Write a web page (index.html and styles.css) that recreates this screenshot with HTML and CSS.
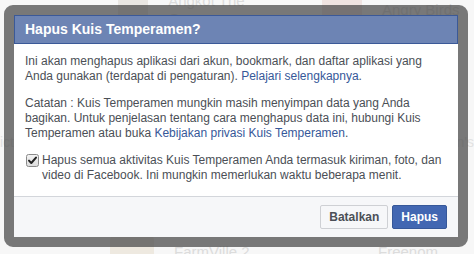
FILE: index.html
```html
<!DOCTYPE html>
<html lang="id">
<head>
<meta charset="utf-8">
<title>Hapus Kuis Temperamen?</title>
<link rel="stylesheet" href="styles.css">
</head>
<body>
<div class="page">
  <div class="row row-top">
    <div class="tile">
      <div class="app-icon"></div>
      <span class="app-name">Angkot The Game</span>
    </div>
    <div class="tile">
      <div class="app-icon icon-red"></div>
      <span class="app-name">Angry Birds</span>
    </div>
  </div>
  <div class="row row-mid">
    <span class="side-text">ict</span>
    <span class="side-text">n's</span>
  </div>
  <div class="row row-bottom">
    <div class="tile">
      <div class="app-icon icon-farm"></div>
      <span class="app-name">FarmVille 2</span>
    </div>
    <div class="tile">
      <div class="app-icon icon-free"></div>
      <span class="app-name">Freenom</span>
    </div>
  </div>
</div>

<div class="overlay">
  <div class="dialog">
    <div class="dialog-header">Hapus Kuis Temperamen?</div>
    <div class="dialog-body">
      <p>Ini akan menghapus aplikasi dari akun, bookmark, dan daftar aplikasi yang Anda gunakan (terdapat di pengaturan). <a href="#">Pelajari selengkapnya</a>.</p>
      <p>Catatan : Kuis Temperamen mungkin masih menyimpan data yang Anda bagikan. Untuk penjelasan tentang cara menghapus data ini, hubungi Kuis Temperamen atau buka <a href="#">Kebijakan privasi Kuis Temperamen</a>.</p>
      <label class="check-row">
        <svg class="checkbox" width="13" height="13" viewBox="0 0 13 13" aria-hidden="true">
          <defs>
            <linearGradient id="cbg" x1="0" y1="0" x2="0" y2="1">
              <stop offset="0" stop-color="#f4f4f4"/>
              <stop offset="1" stop-color="#dcdcdc"/>
            </linearGradient>
          </defs>
          <rect x="0.5" y="0.5" width="12" height="12" rx="2" fill="url(#cbg)" stroke="#8a8a8a"/>
          <path d="M3 6.6 L5.3 9 L10 3.6" fill="none" stroke="#222" stroke-width="2" stroke-linecap="round" stroke-linejoin="round"/>
        </svg>
        <span>Hapus semua aktivitas Kuis Temperamen Anda termasuk kiriman, foto, dan video di Facebook. Ini mungkin memerlukan waktu beberapa menit.</span>
      </label>
    </div>
    <div class="dialog-footer">
      <button class="btn btn-cancel" type="button">Batalkan</button>
      <button class="btn btn-confirm" type="button">Hapus</button>
    </div>
  </div>
</div>
</body>
</html>
```

FILE: styles.css
```css
html, body {
  margin: 0;
  padding: 0;
}

body {
  width: 474px;
  height: 254px;
  overflow: hidden;
  background: #f7f7f7;
  font-family: "Liberation Sans", Arial, Helvetica, sans-serif;
  position: relative;
}

/* faded page behind the dialog */
.page {
  display: flex;
  flex-direction: column;
  height: 254px;
  overflow: hidden;
  justify-content: space-between;
}

.row {
  display: flex;
  flex: none;
}

.row-top {
  margin-top: -22px;
  padding-left: 118px;
  gap: 52px;
}

.row-mid {
  justify-content: space-between;
  margin-top: 20px;
}

.row-bottom {
  padding-left: 110px;
  gap: 52px;
  margin-bottom: -26px;
}

.tile {
  display: flex;
  align-items: center;
  gap: 20px;
  width: 180px;
}

.app-icon {
  width: 36px;
  height: 36px;
  border-radius: 4px;
  background: #e9e6e2;
}

.icon-red { background: #efe3e1; width: 40px; }
.icon-farm { background: #eee9e0; width: 44px; height: 44px; }
.icon-free { background: transparent; width: 40px; }

.app-name {
  font-size: 15px;
  color: #dcdcdc;
  line-height: 18px;
  padding-top: 14px;
}

.row-bottom .app-name {
  padding-top: 0;
  padding-bottom: 12px;
}

.side-text {
  font-size: 14px;
  color: #e2e2e2;
}

/* modal */
.overlay {
  position: absolute;
  left: 4px;
  top: 5px;
  width: 464px;
  height: 242px;
  box-sizing: border-box;
  border: 10px solid rgba(70, 70, 70, 0.72);
  border-radius: 9px;
  background-clip: padding-box;
}

.dialog {
  display: flex;
  flex-direction: column;
  height: 100%;
  background: #fff;
}

.dialog-header {
  height: 29px;
  box-sizing: border-box;
  background: #6d84b4;
  border: 1px solid #3b5998;
  color: #fff;
  font-size: 14px;
  font-weight: bold;
  line-height: 27px;
  padding: 0 10px;
}

.dialog-body {
  flex: 1;
  padding: 10px 10px 0 11px;
  font-size: 12px;
  line-height: 15px;
  color: #4b4f56;
}

.dialog-body p {
  margin: 0 0 12px;
}

.dialog-body a {
  color: #365899;
  text-decoration: none;
}

.check-row {
  display: flex;
  align-items: flex-start;
  gap: 3px;
  line-height: 15px;
}

.checkbox {
  flex: none;
  margin: 1px 0 0 1px;
}

.dialog-footer {
  display: flex;
  justify-content: flex-end;
  gap: 4px;
  padding: 8px 11px;
  background: #f6f7f9;
  border-top: 1px solid #d3d6db;
}

.btn {
  height: 24px;
  box-sizing: border-box;
  padding: 0 8px;
  border-radius: 2px;
  font-family: "Liberation Sans", Arial, Helvetica, sans-serif;
  font-size: 12px;
  font-weight: bold;
  line-height: 22px;
  cursor: pointer;
}

.btn-cancel {
  background: #f6f7f9;
  border: 1px solid #ced0d4;
  color: #4b4f56;
}

.btn-confirm {
  background: #4267b2;
  border: 1px solid #365899;
  color: #fff;
}
```
